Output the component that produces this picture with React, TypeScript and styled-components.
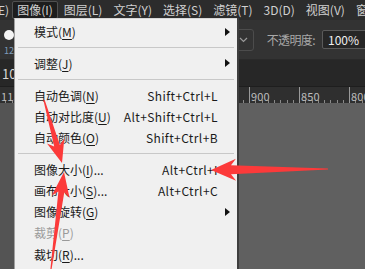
import React from 'react';
import styled, {createGlobalStyle} from 'styled-components';

const GlobalStyle = createGlobalStyle`
  html, body {
    margin: 0;
    padding: 0;
    background: #606060;
  }
  body {
    font-family: "Noto Sans CJK SC", "Noto Sans", sans-serif;
  }
`;

interface MenuEntry {
  label: string;
  key?: string;
  suffix?: string;
  shortcut?: string;
  sub?: boolean;
  disabled?: boolean;
  separator?: boolean;
}

const topMenus = [
  {label: '图像', key: 'I', active: true},
  {label: '图层', key: 'L'},
  {label: '文字', key: 'Y'},
  {label: '选择', key: 'S'},
  {label: '滤镜', key: 'T'},
  {label: '3D', key: 'D'},
  {label: '视图', key: 'V'},
  {label: '窗', key: ''},
];

const entries: MenuEntry[] = [
  {label: '模式', key: 'M', sub: true},
  {separator: true, label: ''},
  {label: '调整', key: 'J', sub: true},
  {separator: true, label: ''},
  {label: '自动色调', key: 'N', shortcut: 'Shift+Ctrl+L'},
  {label: '自动对比度', key: 'U', shortcut: 'Alt+Shift+Ctrl+L'},
  {label: '自动颜色', key: 'O', shortcut: 'Shift+Ctrl+B'},
  {separator: true, label: ''},
  {label: '图像大小', key: 'I', suffix: '...', shortcut: 'Alt+Ctrl+I'},
  {label: '画布大小', key: 'S', suffix: '...', shortcut: 'Alt+Ctrl+C'},
  {label: '图像旋转', key: 'G', sub: true},
  {label: '裁剪', key: 'P', disabled: true},
  {label: '裁切', key: 'R', suffix: '...'},
];

const rulerLabels = ['1150', '1100', '1050', '1000', '950', '900', '850', '800'];

// tapered red arrow, tail -> tip
const arrow = (
  x1: number,
  y1: number,
  x2: number,
  y2: number,
  neck: number,
  head: number,
  len: number,
) => {
  const L = Math.hypot(x2 - x1, y2 - y1);
  const dx = (x2 - x1) / L;
  const dy = (y2 - y1) / L;
  const nx = -dy;
  const ny = dx;
  const p = (a: number, b: number) => `${(x2 - dx * a + nx * b).toFixed(1)},${(y2 - dy * a + ny * b).toFixed(1)}`;
  return [
    p(L, 0.6),
    p(len - 2, neck / 2),
    p(len + 3, head / 2),
    p(0, 0),
    p(len + 3, -head / 2),
    p(len - 2, -neck / 2),
    p(L, -0.6),
  ].join(' ');
};

export default function App() {
  return (
    <Screen>
      <GlobalStyle />
      <MenuBar>
        <BarItem>E)</BarItem>
        {topMenus.map((m) => (
          <BarItem key={m.label} $active={m.active}>
            {m.label}
            {m.key && `(${m.key})`}
          </BarItem>
        ))}
      </MenuBar>

      <OptionsBar>
        <BrushPreview>
          <Dot />
          <BrushSize>12</BrushSize>
        </BrushPreview>
        <OptionsRight>
          <Dropdown>
            <svg width="9" height="6" viewBox="0 0 9 6">
              <path d="M1 1l3.5 3.5L8 1" fill="none" stroke="#9a9a9a" strokeWidth="1.2" />
            </svg>
          </Dropdown>
          <OptLabel>不透明度:</OptLabel>
          <OptInput>100%</OptInput>
        </OptionsRight>
      </OptionsBar>

      <TabBar>10</TabBar>

      <Ruler>
        {rulerLabels.map((r) => (
          <RulerCell key={r}>{r}</RulerCell>
        ))}
      </Ruler>

      <Canvas>
        <Pasteboard />
        <Document />
      </Canvas>

      <Menu>
        {entries.map((e, i) =>
          e.separator ? (
            <Separator key={i} />
          ) : (
            <Entry key={i} $disabled={e.disabled}>
              <span>
                {e.label}(<u>{e.key}</u>){e.suffix}
              </span>
              <Shortcut>{e.shortcut}</Shortcut>
              <SubArrow>{e.sub && <Tri />}</SubArrow>
            </Entry>
          ),
        )}
      </Menu>

      <Arrows width="365" height="269" viewBox="0 0 365 269">
        <polygon points={arrow(44, 100, 62, 163, 6, 18, 20)} />
        <polygon points={arrow(51, 269, 64, 172, 6, 18, 22)} />
        <polygon points={arrow(328, 169, 211, 170, 9, 22, 22)} />
      </Arrows>
    </Screen>
  );
}

const Screen = styled.div`
  position: relative;
  width: 365px;
  height: 269px;
  overflow: hidden;
  display: flex;
  flex-direction: column;
  background: #606060;
`;

const MenuBar = styled.div`
  height: 20px;
  flex: 0 0 20px;
  display: flex;
  align-items: center;
  gap: 1px;
  background: #2c2c2c;
  white-space: nowrap;
`;

const BarItem = styled.div<{$active?: boolean}>`
  height: 16px;
  line-height: 16px;
  padding: 0 4px;
  font-size: 12px;
  color: #d0d0d0;
  border-radius: 2px;
  border: 1px solid ${(p) => (p.$active ? '#505050' : 'transparent')};
  background: ${(p) => (p.$active ? '#1d1d1d' : 'transparent')};
  &:first-child {
    padding: 0 2px 0 0;
    margin-left: -2px;
    border: none;
  }
`;

const OptionsBar = styled.div`
  height: 40px;
  flex: 0 0 40px;
  display: flex;
  align-items: center;
  justify-content: space-between;
  background: #333333;
  border-bottom: 1px solid #2a2a2a;
  box-sizing: border-box;
`;

const BrushPreview = styled.div`
  display: flex;
  flex-direction: column;
  align-items: center;
  width: 18px;
  margin-top: 8px;
`;

const Dot = styled.div`
  width: 10px;
  height: 10px;
  border-radius: 50%;
  background: #f4f4f4;
`;

const BrushSize = styled.div`
  font-size: 9px;
  line-height: 14px;
  color: #7f9cbc;
  margin-top: 4px;
`;

const OptionsRight = styled.div`
  display: flex;
  align-items: center;
  margin-right: -8px;
`;

const Dropdown = styled.div`
  width: 18px;
  height: 20px;
  border: 1px solid #4c4c4c;
  border-radius: 3px;
  display: flex;
  align-items: center;
  justify-content: center;
  margin-right: 13px;
`;

const OptLabel = styled.div`
  font-size: 12px;
  letter-spacing: -0.6px;
  color: #a8a8a8;
  margin-right: 7px;
`;

const OptInput = styled.div`
  width: 44px;
  height: 17px;
  line-height: 17px;
  border: 1px solid #5a5a5a;
  border-radius: 2px;
  background: #262626;
  color: #f0f0f0;
  font-size: 12px;
  padding-left: 5px;
`;

const TabBar = styled.div`
  height: 27px;
  flex: 0 0 27px;
  background: #272727;
  color: #d8d8d8;
  font-size: 13px;
  line-height: 27px;
  padding-left: 2px;
  border-bottom: 1px solid #1e1e1e;
  box-sizing: border-box;
`;

const Ruler = styled.div`
  height: 16px;
  flex: 0 0 16px;
  display: flex;
  margin-left: -1px;
  background-color: #2f2f2f;
  background-image: repeating-linear-gradient(
    90deg,
    #8a8a8a 0 1px,
    transparent 1px 6.25px
  );
  background-size: 100% 3px;
  background-position: 0 100%;
  background-repeat: no-repeat;
`;

const RulerCell = styled.div`
  flex: 0 0 50px;
  box-sizing: border-box;
  border-left: 1px solid #9a9a9a;
  padding-left: 1px;
  font-size: 11px;
  line-height: 18px;
  color: #bdbdbd;
  letter-spacing: 0.2px;
  overflow: hidden;
  white-space: nowrap;
`;

const Canvas = styled.div`
  flex: 1;
  display: flex;
`;

const Pasteboard = styled.div`
  flex: 0 0 120px;
  background: #545454;
`;

const Document = styled.div`
  flex: 1;
  background: #606060;
`;

const Menu = styled.div`
  position: absolute;
  left: 14px;
  top: 18px;
  width: 222px;
  padding: 2px 0 4px;
  background: #f0f0f0;
  border-left: 1px solid #a0a0a0;
  border-top: 1px solid #d8d8d8;
  box-shadow: 2px 0 0 #3e3e3e;
  font-size: 12px;
  color: #1a1a1a;
`;

const Entry = styled.div<{$disabled?: boolean}>`
  height: 21.2px;
  display: grid;
  grid-template-columns: 1fr auto 19px;
  align-items: center;
  padding-left: 19px;
  color: ${(p) => (p.$disabled ? '#9a9a9a' : '#1a1a1a')};
  white-space: nowrap;

  u {
    text-underline-offset: 2px;
  }
`;

const Shortcut = styled.span`
  letter-spacing: 0.4px;
`;

const SubArrow = styled.span`
  display: flex;
  justify-content: center;
`;

const Tri = styled.i`
  width: 0;
  height: 0;
  border-top: 4px solid transparent;
  border-bottom: 4px solid transparent;
  border-left: 5px solid #111;
`;

const Separator = styled.div`
  height: 10.6px;
  display: flex;
  align-items: center;
  padding: 0 3px;

  &::after {
    content: '';
    flex: 1;
    height: 1px;
    background: #c8c8c8;
  }
`;

const Arrows = styled.svg`
  position: absolute;
  left: 0;
  top: 0;
  pointer-events: none;

  polygon {
    fill: #fc3a3a;
  }
`;
